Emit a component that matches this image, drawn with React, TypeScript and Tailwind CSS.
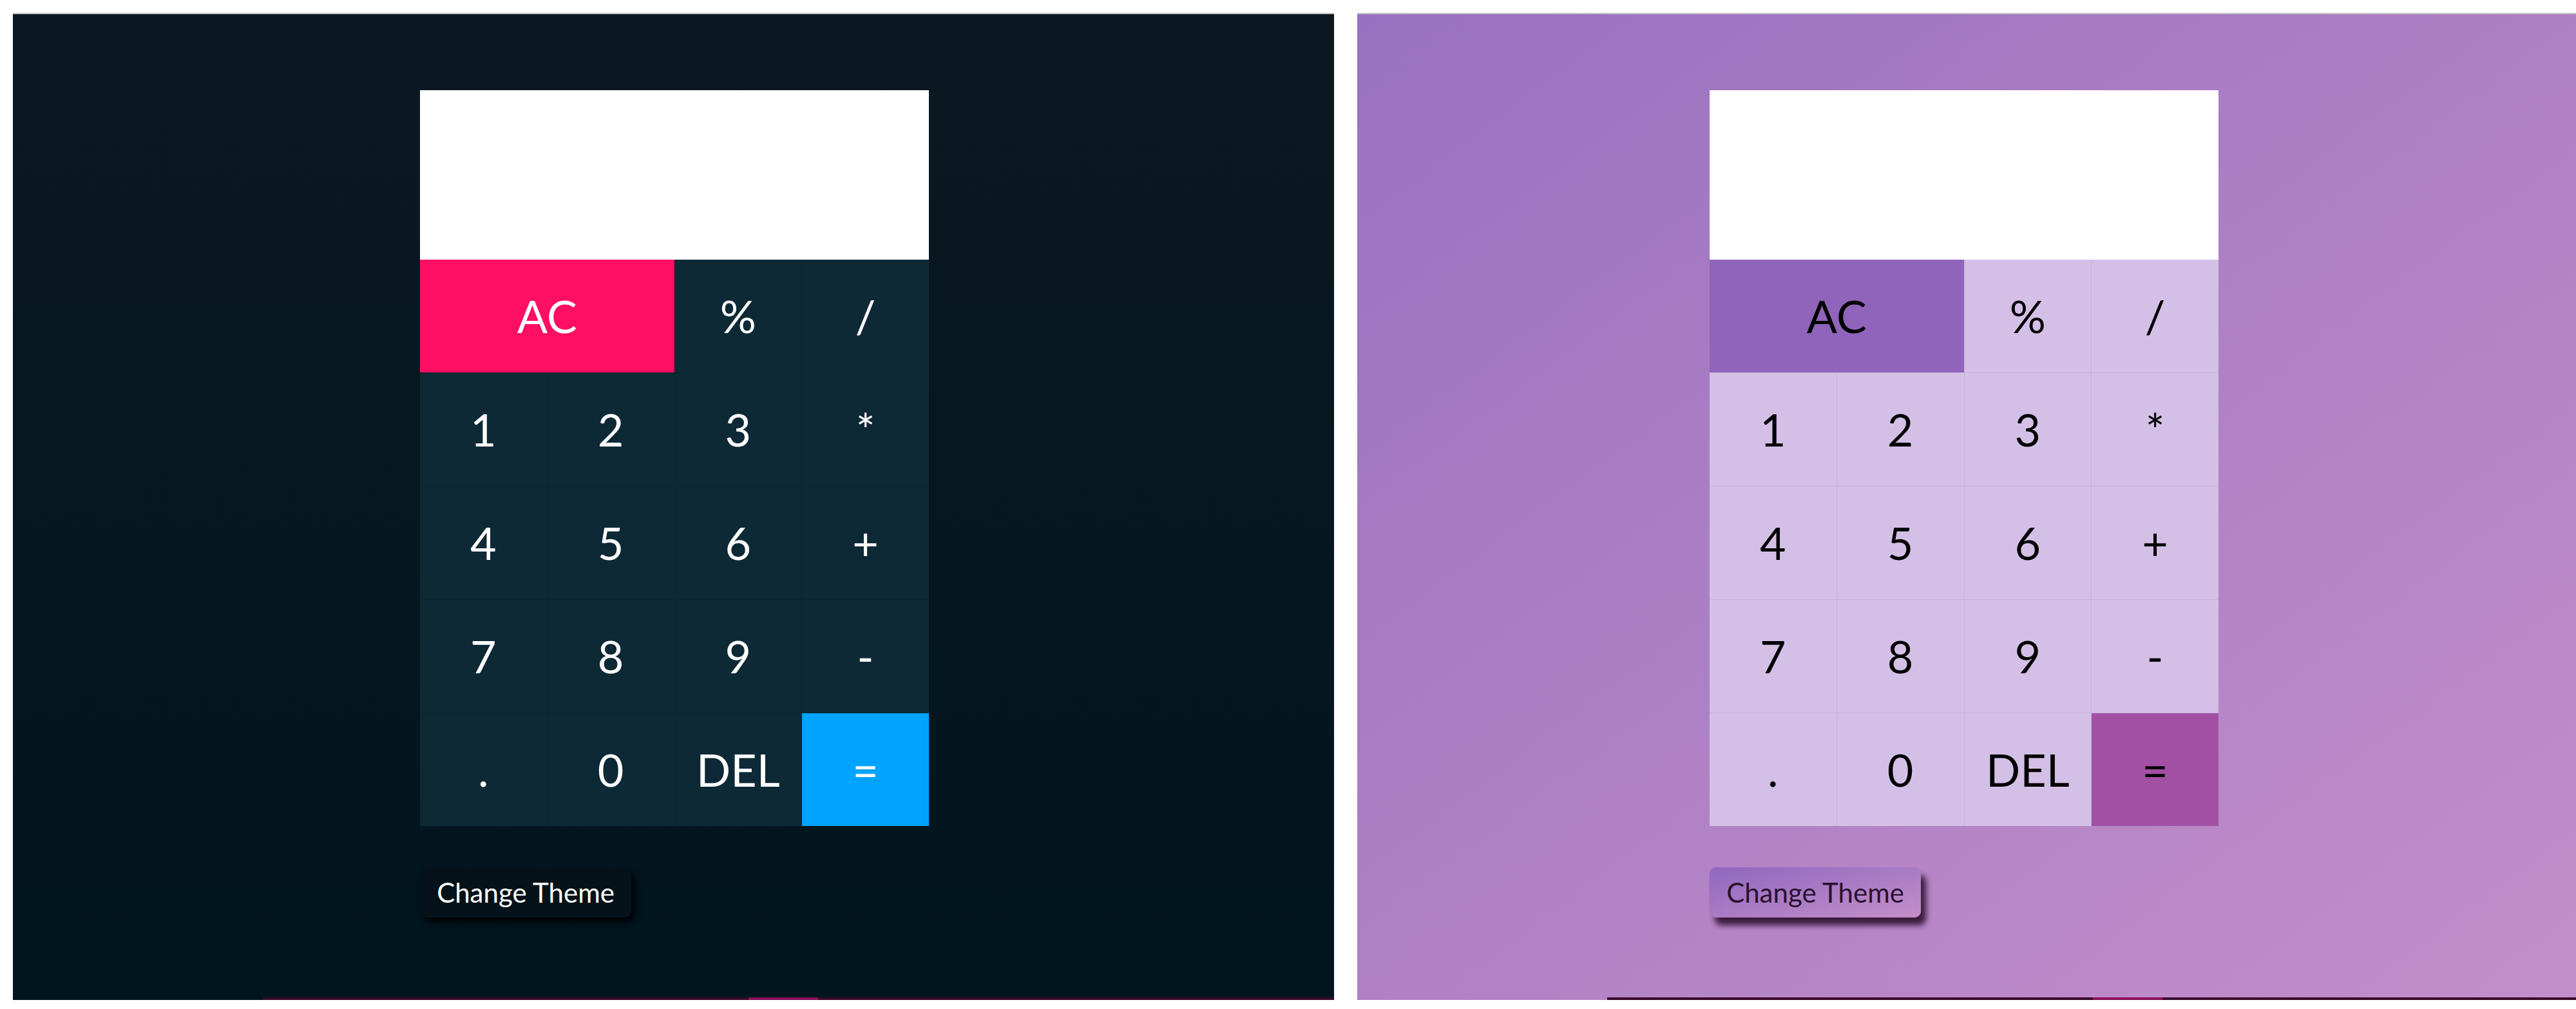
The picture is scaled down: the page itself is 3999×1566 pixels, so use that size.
import React from 'react';

type Theme = {
  panel: string;
  grid: string;
  key: string;
  ac: string;
  eq: string;
  text: string;
  button: string;
  strip: string;
  pad: string;
};

const dark: Theme = {
  panel: 'bg-gradient-to-b from-[#0b1821] to-[#01151f]',
  grid: 'bg-[#0a2330]',
  key: 'bg-[#0e2936]',
  ac: 'bg-[#ff0f61]',
  eq: 'bg-[#00a3ff]',
  text: 'text-white',
  button: 'bg-[#06121a] text-white shadow-[6px_8px_10px_rgba(0,0,0,0.85)]',
  strip: 'bg-[#3a0a2a]',
  pad: 'pl-[632px]',
};

const purple: Theme = {
  panel: 'bg-gradient-to-br from-[#9a71c0] to-[#c590ca]',
  grid: 'bg-[#c8b0dd]',
  key: 'bg-[#d4c0e6]',
  ac: 'bg-[#8f64ba]',
  eq: 'bg-[#a250a4]',
  text: 'text-black',
  button:
    'bg-gradient-to-br from-[#9067bf] to-[#c38fc9] text-[#2a1030] shadow-[8px_12px_10px_rgba(45,15,45,0.9)]',
  strip: 'bg-[#3a0a2a]',
  pad: 'pl-[547px]',
};

const keys = ['1', '2', '3', '*', '4', '5', '6', '+', '7', '8', '9', '-', '.', '0', 'DEL'];

function Key({ label, bg, text }: { label: string; bg: string; text: string }) {
  return (
    <div className={`${bg} ${text} h-[175px] flex items-center justify-center text-[70px] font-normal`}>
      {label}
    </div>
  );
}

function Calculator({ theme }: { theme: Theme }) {
  return (
    <div className={`w-[2051px] h-[1532px] flex flex-col border-t-2 border-[#c4c4c4] ${theme.panel}`}>
      <div className={`flex-1 pt-[118px] ${theme.pad}`}>
        <div className="w-[790px]">
          <div className="h-[263px] bg-white" />
          <div className={`grid grid-cols-4 gap-px ${theme.grid}`}>
            <div className="col-span-2">
              <Key label="AC" bg={theme.ac} text={theme.text} />
            </div>
            <Key label="%" bg={theme.key} text={theme.text} />
            <Key label="/" bg={theme.key} text={theme.text} />
            {keys.map((k) => (
              <Key key={k} label={k} bg={theme.key} text={theme.text} />
            ))}
            <Key label="=" bg={theme.eq} text={theme.text} />
          </div>
        </div>
        <button
          className={`mt-[64px] w-[328px] h-[78px] rounded-[10px] text-[42px] leading-none ${theme.button}`}
        >
          Change Theme
        </button>
      </div>
      <div className={`h-[4px] ml-[388px] flex ${theme.strip}`}>
        <div className="w-[754px]" />
        <div className="w-[108px] bg-[#8a0f5a]" />
      </div>
    </div>
  );
}

export default function App() {
  return (
    <div
      className="min-h-screen w-[3999px] bg-white pt-[20px] pl-[20px] flex gap-[36px] overflow-hidden"
      style={{ fontFamily: 'Lato, "Open Sans", sans-serif' }}
    >
      <Calculator theme={dark} />
      <div className="w-[1892px] shrink-0">
        <Calculator theme={purple} />
      </div>
    </div>
  );
}
